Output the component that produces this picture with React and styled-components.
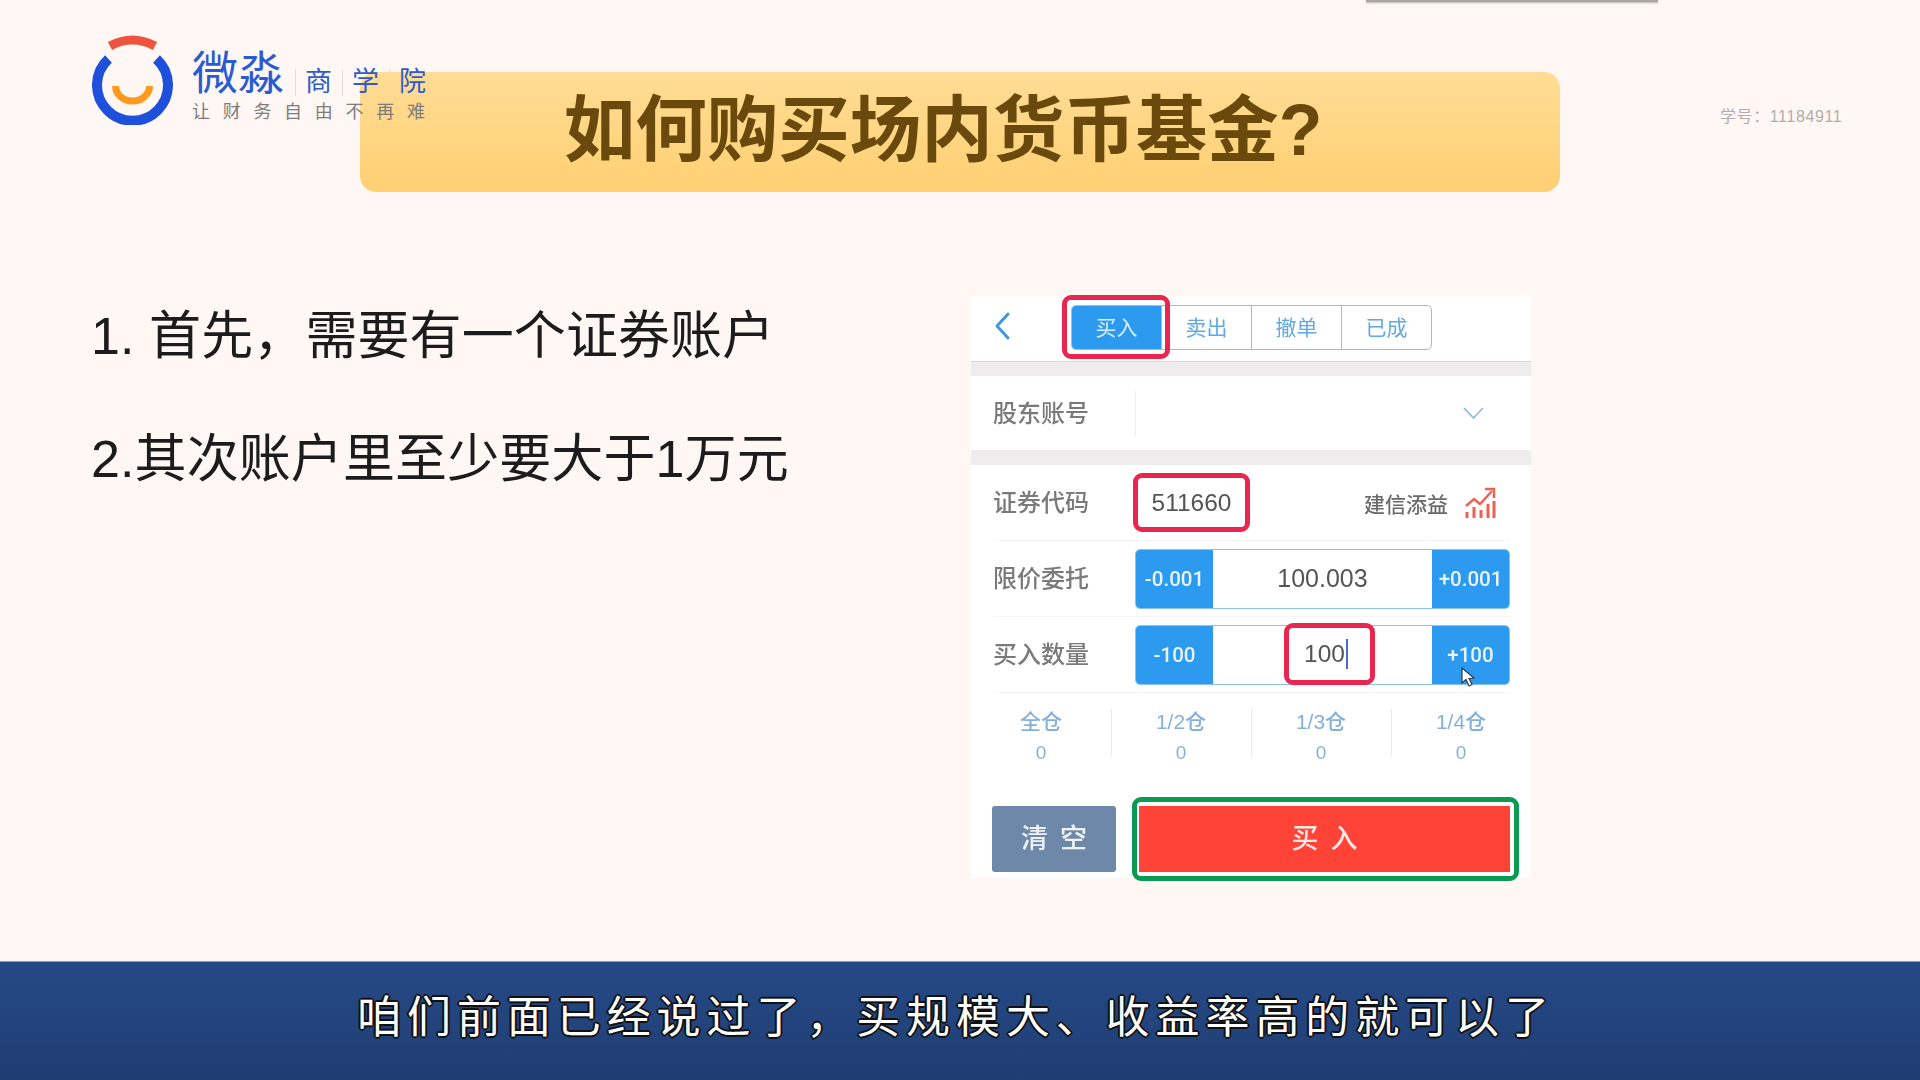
import styled, { createGlobalStyle } from "styled-components";

const GlobalStyle = createGlobalStyle`
  html, body {
    margin: 0;
    padding: 0;
    background: #fff7f4;
  }
  * {
    box-sizing: border-box;
  }
`;

const FONT = `"Liberation Sans", "Noto Sans CJK SC", sans-serif`;

// Page frame
const Page = styled.div`
  position: relative;
  width: 1920px;
  height: 1080px;
  overflow: hidden;
  display: flex;
  flex-direction: column;
  background: #fff7f4;
  font-family: ${FONT};
`;

const Slide = styled.main`
  flex: 1;
  display: flex;
  flex-direction: column;
  padding-top: 72px;
`;

const TopStrip = styled.div`
  position: absolute;
  top: 0;
  left: 1366px;
  width: 292px;
  height: 2px;
  background: #a9a7a6;
  box-shadow: 0 1px 2px rgba(0, 0, 0, 0.3);
`;

// Logo
const Logo = styled.div`
  position: absolute;
  top: 34px;
  left: 92px;
  display: flex;
  gap: 19px;
`;

const LogoText = styled.div`
  display: flex;
  flex-direction: column;
  padding-top: 18px;
`;

const BrandRow = styled.div`
  display: flex;
  align-items: flex-end;
  height: 44px;
`;

const BrandName = styled.span`
  font-size: 46px;
  line-height: 46px;
  width: 103px;
  color: #2a5bd0;
`;

const BrandWord = styled.span`
  width: 47px;
  height: 27px;
  line-height: 27px;
  font-size: 27px;
  color: #2f5cc8;
  border-left: 1px solid #e4dedb;
  padding-left: 9px;
`;

const Slogan = styled.div`
  margin-top: 6px;
  font-size: 18px;
  line-height: 20px;
  letter-spacing: 12.7px;
  white-space: nowrap;
  color: #7d7d7d;
`;

// Title
const TitleBar = styled.h1`
  margin: 0 0 0 360px;
  width: 1200px;
  height: 120px;
  border-radius: 16px;
  background: linear-gradient(180deg, #ffdc96, #ffd072);
  display: flex;
  align-items: center;
  justify-content: center;
  padding: 0 34px 16px 0;
  font-size: 71.5px;
  font-weight: 700;
  color: #6a4a0c;
`;

const StudentNo = styled.div`
  position: absolute;
  top: 107px;
  left: 1720px;
  font-size: 16px;
  line-height: 20px;
  letter-spacing: 0.6px;
  color: #b3acaa;
`;

// Body
const Content = styled.section`
  display: flex;
  padding: 104px 0 0 91px;
`;

const Points = styled.div`
  width: 880px;
  display: flex;
  flex-direction: column;
  gap: 53px;
  padding-top: 5px;
`;

const Point = styled.p`
  margin: 0;
  height: 70px;
  line-height: 70px;
  font-size: 52px;
  letter-spacing: 0.1px;
  color: #1c1c1c;
  white-space: nowrap;
`;

// Phone screenshot
const Phone = styled.div`
  position: relative;
  width: 560px;
  height: 582px;
  background: #fff;
  filter: blur(0.4px);
`;

const TabRow = styled.div`
  height: 65px;
  display: flex;
  align-items: center;
  padding-left: 23px;
`;

const BackIcon = styled.svg`
  width: 17px;
  height: 30px;
  margin-right: 60px;
  margin-top: -6px;
`;

const Tabs = styled.div`
  position: relative;
  display: flex;
  width: 361px;
  height: 45px;
  margin-top: -3px;
  border: 1.5px solid #8cc3ee;
  border-radius: 5px;
`;

const Tab = styled.div`
  flex: 1;
  display: flex;
  align-items: center;
  justify-content: center;
  padding-bottom: 3px;
  font-size: 21px;
  color: ${(p) => (p.$active ? "#d9edff" : "#62a9e4")};
  background: ${(p) => (p.$active ? "#2b9aef" : "transparent")};
  border-left: ${(p) => (p.$first ? "0" : "1.5px solid #8cc3ee")};
  border-radius: ${(p) => (p.$active ? "4px 0 0 4px" : "0")};
`;

const GrayBand = styled.div`
  height: 15px;
  background: #eeeced;
  border-top: ${(p) => (p.$line ? "1px solid #dbd9da" : "0")};
`;

const AccountRow = styled.div`
  height: 74px;
  display: flex;
  align-items: center;
  padding: 0 47px 0 22px;
`;

const Label = styled.span`
  width: 142px;
  flex: none;
  font-size: 24px;
  font-weight: 500;
  margin-top: -4px;
  color: #7a7a7a;
`;

const AccountValue = styled.div`
  flex: 1;
  height: 45px;
  display: flex;
  align-items: center;
  justify-content: flex-end;
  border-left: 1px solid #f0eeee;
`;

const FormRow = styled.div`
  position: relative;
  height: 76px;
  margin: 0 21px 0 22px;
  display: flex;
  align-items: center;
  border-bottom: 1px solid #f5f5f5;
`;

const Highlight = styled.div`
  position: absolute;
  border: 5px solid ${(p) => p.$color || "#e8264f"};
  border-radius: 9px;
  pointer-events: none;
`;

const TabHighlight = styled(Highlight)`
  top: -11px;
  left: -10px;
  width: 108px;
  height: 64px;
`;

const CodeBox = styled.div`
  width: 117px;
  height: 59px;
  flex: none;
  margin-left: -2px;
  display: flex;
  align-items: center;
  justify-content: center;
  border: 5px solid #e8264f;
  border-radius: 9px;
  font-size: 24.5px;
  color: #555;
`;

const FundName = styled.span`
  margin-left: auto;
  font-size: 21px;
  font-weight: 500;
  color: #6a6a6a;
`;

const ChartIcon = styled.svg`
  width: 32px;
  height: 31px;
  margin: 0 14px 0 16px;
`;

const Stepper = styled.div`
  flex: 1;
  height: 60px;
  display: flex;
  border: 1.5px solid #8cc3ee;
  border-radius: 5px;
  overflow: hidden;
`;

const StepButton = styled.div`
  width: 77px;
  flex: none;
  display: flex;
  align-items: center;
  justify-content: center;
  background: #2b9aef;
  color: #e8f4ff;
  font-family: Roboto, sans-serif;
  font-size: 20.5px;
  font-weight: 500;
  padding-top: 1px;
`;

const StepValue = styled.div`
  flex: 1;
  display: flex;
  align-items: center;
  justify-content: center;
  font-size: 25px;
  color: #555;
`;

const QtyHighlight = styled(Highlight)`
  top: 6px;
  left: 291px;
  width: 91px;
  height: 62px;
  display: flex;
  align-items: center;
  justify-content: center;
  padding-right: 7px;
  font-size: 24.5px;
  color: #555;
  background: #fff;
`;

const Caret = styled.span`
  display: inline-block;
  width: 2px;
  height: 30px;
  background: #4a66d8;
  margin-left: 1px;
`;

const Pointer = styled.svg`
  position: absolute;
  top: 50px;
  left: 468px;
  width: 14px;
  height: 20px;
`;

const Ratios = styled.div`
  display: grid;
  grid-template-columns: repeat(4, 1fr);
  padding-top: 16px;
  height: 113px;
`;

const Ratio = styled.div`
  position: relative;
  height: 47px;
  text-align: center;
  color: #85b1d9;
  font-size: 21px;
  font-weight: 500;

  &::before {
    content: "";
    display: ${(p) => (p.$first ? "none" : "block")};
    position: absolute;
    left: 0;
    top: 0;
    height: 47px;
    width: 1px;
    background: #e9e9ec;
  }
`;

const RatioName = styled.div`
  line-height: 26px;
`;

const RatioCount = styled.div`
  margin-top: 5px;
  line-height: 26px;
  font-size: 19px;
`;

const Actions = styled.div`
  position: relative;
  display: flex;
  gap: 23px;
  padding: 0 21px;
`;

const ClearButton = styled.div`
  width: 124px;
  height: 66px;
  display: flex;
  align-items: center;
  justify-content: center;
  border-radius: 3px;
  background: #6d88a8;
  color: #eef2f6;
  font-size: 27px;
  font-weight: 500;
  letter-spacing: 12px;
  padding: 0 0 6px 12px;
`;

const BuyButton = styled.div`
  flex: 1;
  height: 66px;
  display: flex;
  align-items: center;
  justify-content: center;
  background: #ff4337;
  color: #ffe9e6;
  font-size: 27px;
  font-weight: 500;
  letter-spacing: 12px;
  padding: 0 0 6px 12px;
`;

const BuyHighlight = styled(Highlight)`
  top: -9px;
  left: 161px;
  width: 387px;
  height: 84px;
`;

// Subtitle band
const CaptionBand = styled.footer`
  height: 119px;
  display: flex;
  align-items: center;
  justify-content: center;
  padding: 0 8px 14px 0;
  border-top: 1px solid #8ea1c2;
  background: linear-gradient(180deg, #264a86, #1f3d73);
`;

const Caption = styled.div`
  font-size: 44px;
  letter-spacing: 5.9px;
  color: #fff;
  white-space: nowrap;
  text-shadow: -2px 0 #111, 2px 0 #111, 0 -2px #111, 0 2px #111,
    -1px -1px #111, 1px 1px #111, -1px 1px #111, 1px -1px #111;
`;

const tabs = ["买入", "卖出", "撤单", "已成"];
const ratios = ["全仓", "1/2仓", "1/3仓", "1/4仓"];

function App() {
  return (
    <Page>
      <GlobalStyle />
      <Slide>
        <TitleBar>如何购买场内货币基金?</TitleBar>
        <Content>
          <Points>
            <Point>1. 首先，需要有一个证券账户</Point>
            <Point>2.其次账户里至少要大于1万元</Point>
          </Points>
          <Phone>
            <TabRow>
              <BackIcon viewBox="0 0 17 30">
                <path d="M14 3 L3 15 L14 27" fill="none" stroke="#3f97e0" strokeWidth="3" strokeLinecap="round" strokeLinejoin="round" />
              </BackIcon>
              <Tabs>
                {tabs.map((tab, i) => (
                  <Tab key={tab} $active={i === 0} $first={i === 0}>{tab}</Tab>
                ))}
                <TabHighlight />
              </Tabs>
            </TabRow>
            <GrayBand $line />
            <AccountRow>
              <Label>股东账号</Label>
              <AccountValue>
                <svg width="21" height="12" viewBox="0 0 21 12">
                  <path d="M1 1 L10.5 11 L20 1" fill="none" stroke="#8cb6dc" strokeWidth="1.6" />
                </svg>
              </AccountValue>
            </AccountRow>
            <GrayBand />
            <FormRow>
              <Label>证券代码</Label>
              <CodeBox>511660</CodeBox>
              <FundName>建信添益</FundName>
              <ChartIcon viewBox="0 0 32 31">
                <path d="M2 19 L10 12 L16 17 L28 4" fill="none" stroke="#f0604f" strokeWidth="2.4" />
                <path d="M21 2 H30 V11" fill="none" stroke="#f0604f" strokeWidth="2.4" />
                <path d="M3 31 V25 M10 31 V20 M17 31 V23 M24 31 V17 M30 31 V14" fill="none" stroke="#f0604f" strokeWidth="3" />
              </ChartIcon>
            </FormRow>
            <FormRow>
              <Label>限价委托</Label>
              <Stepper>
                <StepButton>-0.001</StepButton>
                <StepValue>100.003</StepValue>
                <StepButton>+0.001</StepButton>
              </Stepper>
            </FormRow>
            <FormRow>
              <Label>买入数量</Label>
              <Stepper>
                <StepButton>-100</StepButton>
                <StepValue />
                <StepButton>+100</StepButton>
              </Stepper>
              <QtyHighlight>100<Caret /></QtyHighlight>
              <Pointer viewBox="0 0 14 20">
                <path d="M1 1 L1 16 L5 12.5 L8 19 L11 17.5 L8 11.5 L13 11 Z" fill="#fff" stroke="#2d3a55" strokeWidth="1.2" />
              </Pointer>
            </FormRow>
            <Ratios>
              {ratios.map((ratio, i) => (
                <Ratio key={ratio} $first={i === 0}>
                  <RatioName>{ratio}</RatioName>
                  <RatioCount>0</RatioCount>
                </Ratio>
              ))}
            </Ratios>
            <Actions>
              <ClearButton>清空</ClearButton>
              <BuyButton>买入</BuyButton>
              <BuyHighlight $color="#0a9a52" />
            </Actions>
          </Phone>
        </Content>
      </Slide>
      <CaptionBand>
        <Caption>咱们前面已经说过了，买规模大、收益率高的就可以了</Caption>
      </CaptionBand>
      <TopStrip />
      <Logo>
        <svg width="81" height="91" viewBox="0 0 81 91">
          <path d="M16.5 25 A35.5 35.5 0 1 0 64.5 25" fill="none" stroke="#1e50dc" strokeWidth="10" />
          <path d="M18 12 Q40 0 63 12" fill="none" stroke="#ee5340" strokeWidth="9" />
          <path d="M23.5 52 A17 15 0 0 0 57.5 52" fill="none" stroke="#ff9a1e" strokeWidth="7" />
        </svg>
        <LogoText>
          <BrandRow>
            <BrandName>微淼</BrandName>
            <BrandWord>商</BrandWord>
            <BrandWord>学</BrandWord>
            <BrandWord>院</BrandWord>
          </BrandRow>
          <Slogan>让财务自由不再难</Slogan>
        </LogoText>
      </Logo>
      <StudentNo>学号：11184911</StudentNo>
    </Page>
  );
}

export default App;
